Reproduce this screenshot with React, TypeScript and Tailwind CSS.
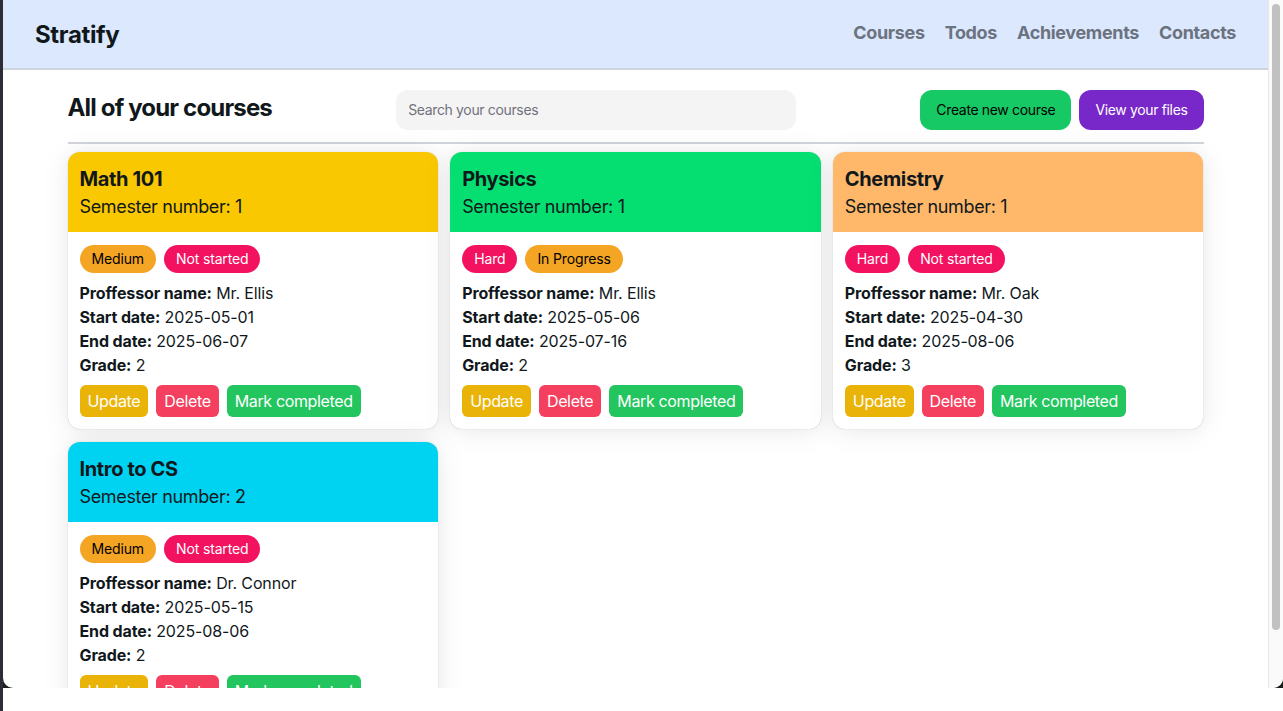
import React from 'react'

interface Course {
  name: string
  semester: number
  headerClass: string
  difficulty: 'Medium' | 'Hard'
  status: 'Not started' | 'In Progress'
  professor: string
  start: string
  end: string
  grade: number
}

const COURSES: Course[] = [
  { name: 'Math 101', semester: 1, headerClass: 'bg-[#fac800]', difficulty: 'Medium', status: 'Not started', professor: 'Mr. Ellis', start: '2025-05-01', end: '2025-06-07', grade: 2 },
  { name: 'Physics', semester: 1, headerClass: 'bg-[#05df72]', difficulty: 'Hard', status: 'In Progress', professor: 'Mr. Ellis', start: '2025-05-06', end: '2025-07-16', grade: 2 },
  { name: 'Chemistry', semester: 1, headerClass: 'bg-[#ffb86a]', difficulty: 'Hard', status: 'Not started', professor: 'Mr. Oak', start: '2025-04-30', end: '2025-08-06', grade: 3 },
  { name: 'Intro to CS', semester: 2, headerClass: 'bg-[#00d3f2]', difficulty: 'Medium', status: 'Not started', professor: 'Dr. Connor', start: '2025-05-15', end: '2025-08-06', grade: 2 },
]

// warning = amber chip with dark text, danger = pink chip with white text
function Chip({ label }: { label: string }) {
  const warning = label === 'Medium' || label === 'In Progress'
  return (
    <span
      className={
        warning
          ? 'flex h-7 items-center rounded-full bg-[#f5a524] px-3 text-sm tracking-[-0.01em] text-black'
          : 'flex h-7 items-center rounded-full bg-[#f31260] px-3 text-sm tracking-[-0.01em] text-white'
      }
    >
      {label}
    </span>
  )
}

function CourseCard({ c }: { c: Course }) {
  return (
    <div className="flex flex-col overflow-hidden rounded-xl bg-white shadow-[0_0_15px_0_rgba(0,0,0,0.03),0_2px_30px_0_rgba(0,0,0,0.08),0_0_1px_0_rgba(0,0,0,0.3)]">
      <div className={`${c.headerClass} px-3 pt-[13px] pb-[11px] text-[#11181c]`}>
        <h2 className="text-xl font-bold leading-7">{c.name}</h2>
        <p className="text-lg leading-7">Semester number: {c.semester}</p>
      </div>
      <div className="flex flex-1 flex-col px-3 pt-[13px] pb-3 text-[#11181c]">
        <div className="flex gap-2">
          <Chip label={c.difficulty} />
          <Chip label={c.status} />
        </div>
        <div className="mt-2 text-base leading-6 tracking-[-0.008em]">
          <p><span className="font-bold">Proffessor name:</span> {c.professor}</p>
          <p><span className="font-bold">Start date:</span> {c.start}</p>
          <p><span className="font-bold">End date:</span> {c.end}</p>
          <p><span className="font-bold">Grade:</span> {c.grade}</p>
        </div>
        <div className="mt-2 flex gap-2 text-base text-white">
          <button className="h-8 rounded-md bg-[#eab308] px-2">Update</button>
          <button className="h-8 rounded-md bg-[#f43f5e] px-2">Delete</button>
          <button className="h-8 rounded-md bg-[#22c55e] px-2">Mark completed</button>
        </div>
      </div>
    </div>
  )
}

function Navbar() {
  return (
    <header className="flex h-[70px] shrink-0 items-center justify-between border-b-2 border-[#cfd5dd] bg-[#dbe8fd] px-8">
      <span className="mt-[2px] text-2xl font-bold text-[#11181c]">Stratify</span>
      <nav className="-mt-[2px] flex gap-5 text-lg font-bold text-[#6b7280]">
        <a>Courses</a>
        <a>Todos</a>
        <a>Achievements</a>
        <a>Contacts</a>
      </nav>
    </header>
  )
}

function CoursesPage() {
  return (
    <main className="mx-auto w-[1136px]">
      <div className="flex items-start justify-between pt-5">
        <h1 className="mt-[2px] text-2xl font-bold leading-8 tracking-[-0.035em] text-[#11181c]">All of your courses</h1>
        <div className="flex h-10 w-[400px] items-center rounded-xl bg-[#f4f4f5] px-3 text-sm text-[#71717a]">
          Search your courses
        </div>
        <div className="flex gap-2 text-sm">
          <button className="h-10 rounded-xl bg-[#17c964] px-4 text-black">Create new course</button>
          <button className="h-10 rounded-xl bg-[#7828c8] px-4 text-white">View your files</button>
        </div>
      </div>
      <div className="mt-3 h-[2px] bg-[#d1d5db]" />
      <div className="mt-2 grid grid-cols-3 gap-x-3 gap-y-[13px]">
        {COURSES.map((c) => (
          <CourseCard key={c.name} c={c} />
        ))}
      </div>
    </main>
  )
}

export default function App() {
  return (
    <div className="flex h-[711px] w-[1283px] bg-white font-['Inter',sans-serif] tracking-[-0.022em]">
      {/* window edge */}
      <div className="w-[3px] shrink-0 bg-[#2d2d35]" />
      <div className="flex flex-1 flex-col">
        <div className="h-[688px] bg-[#1b1f1b]">
          <div className="flex h-full overflow-hidden rounded-b-[10px] bg-white">
            <div className="flex flex-1 flex-col overflow-hidden">
              <Navbar />
              <CoursesPage />
            </div>
            {/* scrollbar */}
            <div className="flex w-[15px] shrink-0 justify-center border-l border-[#e8e8e8] bg-[#fafafa] pt-[4px]">
              <div className="h-[626px] w-[8px] rounded-full bg-[#c1c1c1]" />
            </div>
          </div>
        </div>
      </div>
    </div>
  )
}
